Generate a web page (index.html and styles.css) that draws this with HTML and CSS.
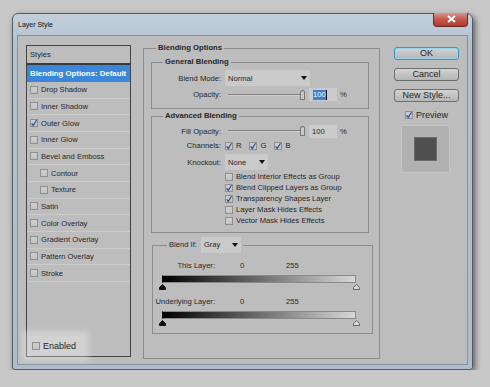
FILE: index.html
```html
<!DOCTYPE html>
<html>
<head>
    <title>Layer Style</title>
    <link rel="stylesheet" href="styles.css">
</head>
<body>
<div class="window">
    <div class="titlebar">
        <span class="title">Layer Style</span>
        <div class="close">
            <svg width="35" height="14" viewBox="0 0 35 14"><path d="M14 4 L21 10 M21 4 L14 10" stroke="#fff" stroke-width="2" fill="none"/></svg>
        </div>
    </div>
    <div class="content">
        <div class="styles">
            <div class="styles-head">Styles</div>
            <div class="style-item selected">Blending Options: Default</div>
            <div class="style-item"><span class="cb"></span>Drop Shadow</div>
            <div class="style-item"><span class="cb"></span>Inner Shadow</div>
            <div class="style-item"><span class="cb on"><svg viewBox="0 0 8 8"><path d="M1.6 4.3 L3.3 6.4 L6.5 1.2"/></svg></span>Outer Glow</div>
            <div class="style-item"><span class="cb"></span>Inner Glow</div>
            <div class="style-item"><span class="cb"></span>Bevel and Emboss</div>
            <div class="style-item sub"><span class="cb"></span>Contour</div>
            <div class="style-item sub"><span class="cb"></span>Texture</div>
            <div class="style-item"><span class="cb"></span>Satin</div>
            <div class="style-item"><span class="cb"></span>Color Overlay</div>
            <div class="style-item"><span class="cb"></span>Gradient Overlay</div>
            <div class="style-item"><span class="cb"></span>Pattern Overlay</div>
            <div class="style-item"><span class="cb"></span>Stroke</div>
            <div class="enabled"><span class="cb"></span>Enabled</div>
        </div>

        <fieldset class="box main">
            <legend>Blending Options</legend>

            <fieldset class="box general">
                <legend>General Blending</legend>
                <div class="row h16 gap2">
                    <span class="lbl">Blend Mode:</span>
                    <div class="select mode">Normal<span class="arrow"></span></div>
                </div>
                <div class="row h13">
                    <span class="lbl">Opacity:</span>
                    <div class="slider"><span class="track"></span><span class="thumb"></span></div>
                    <div class="num"><span class="sel">100</span><span class="caret"></span></div>
                    <span class="pct">%</span>
                </div>
            </fieldset>

            <fieldset class="box advanced">
                <legend>Advanced Blending</legend>
                <div class="row h14">
                    <span class="lbl">Fill Opacity:</span>
                    <div class="slider"><span class="track"></span><span class="thumb"></span></div>
                    <div class="num plain">100</div>
                    <span class="pct">%</span>
                </div>
                <div class="row h15">
                    <span class="lbl">Channels:</span>
                    <span class="cb on"><svg viewBox="0 0 8 8"><path d="M1.6 4.3 L3.3 6.4 L6.5 1.2"/></svg></span><span class="chan">R</span>
                    <span class="cb on"><svg viewBox="0 0 8 8"><path d="M1.6 4.3 L3.3 6.4 L6.5 1.2"/></svg></span><span class="chan">G</span>
                    <span class="cb on"><svg viewBox="0 0 8 8"><path d="M1.6 4.3 L3.3 6.4 L6.5 1.2"/></svg></span><span class="chan">B</span>
                </div>
                <div class="row h16 knock">
                    <span class="lbl">Knockout:</span>
                    <div class="select none">None<span class="arrow"></span></div>
                </div>
                <div class="checks">
                    <div class="check"><span class="cb"></span>Blend Interior Effects as Group</div>
                    <div class="check"><span class="cb on"><svg viewBox="0 0 8 8"><path d="M1.6 4.3 L3.3 6.4 L6.5 1.2"/></svg></span>Blend Clipped Layers as Group</div>
                    <div class="check"><span class="cb on"><svg viewBox="0 0 8 8"><path d="M1.6 4.3 L3.3 6.4 L6.5 1.2"/></svg></span>Transparency Shapes Layer</div>
                    <div class="check"><span class="cb"></span>Layer Mask Hides Effects</div>
                    <div class="check"><span class="cb"></span>Vector Mask Hides Effects</div>
                </div>
            </fieldset>

            <fieldset class="box blendif">
                <legend><span class="bi-label">Blend If:</span><div class="select gray">Gray<span class="arrow"></span></div></legend>
                <div class="bi-row">
                    <span class="bi-lbl">This Layer:</span><span class="v0">0</span><span>255</span>
                </div>
                <div class="bar"></div>
                <div class="thumbs">
                    <svg width="7" height="6" viewBox="0 0 7 6"><path d="M3.5 0.5 L6.5 3.5 L6.5 5.5 L0.5 5.5 L0.5 3.5 Z" fill="#111" stroke="#111"/></svg>
                    <svg width="7" height="6" viewBox="0 0 7 6"><path d="M3.5 0.5 L6.5 3.5 L6.5 5.5 L0.5 5.5 L0.5 3.5 Z" fill="#d8d8d8" stroke="#666"/></svg>
                </div>
                <div class="bi-row second">
                    <span class="bi-lbl">Underlying Layer:</span><span class="v0">0</span><span>255</span>
                </div>
                <div class="bar"></div>
                <div class="thumbs">
                    <svg width="7" height="6" viewBox="0 0 7 6"><path d="M3.5 0.5 L6.5 3.5 L6.5 5.5 L0.5 5.5 L0.5 3.5 Z" fill="#111" stroke="#111"/></svg>
                    <svg width="7" height="6" viewBox="0 0 7 6"><path d="M3.5 0.5 L6.5 3.5 L6.5 5.5 L0.5 5.5 L0.5 3.5 Z" fill="#d8d8d8" stroke="#666"/></svg>
                </div>
            </fieldset>
        </fieldset>

        <div class="side">
            <div class="button ok">OK</div>
            <div class="button">Cancel</div>
            <div class="button">New Style...</div>
            <div class="preview-check"><span class="cb on"><svg viewBox="0 0 8 8"><path d="M1.6 4.3 L3.3 6.4 L6.5 1.2"/></svg></span>Preview</div>
            <div class="preview"><div class="swatch"></div></div>
        </div>
    </div>
</div>
</body>
</html>
```

FILE: styles.css
```css
body {
    margin: 0;
    background: #c8c8c8;
    font-family: "Liberation Sans", Arial, sans-serif;
    font-size: 7.6px;
    color: #262626;
}

.window {
    margin: 13px 0 0 12px;
    width: 461px;
    height: 357px;
    box-sizing: border-box;
    border: 1px solid #555c64;
    border-radius: 6px 6px 3px 3px;
    background: linear-gradient(#c3cfdb, #b3c2d1 30px, #aebdcd);
    padding: 0 4px 4px;
    display: flex;
    flex-direction: column;
    box-shadow: 2px 3px 6px rgba(0, 0, 0, .55);
}
.titlebar {
    height: 21px;
    flex: none;
    display: flex;
    align-items: center;
    justify-content: space-between;
}
.title {
    font-size: 7px;
    padding-left: 1px;
    color: #111;
}
.close {
    align-self: flex-start;
    margin-top: -1px;
    width: 35px;
    height: 14px;
    box-sizing: border-box;
    border: 1px solid #6a2b25;
    border-top: none;
    border-radius: 0 0 4px 4px;
    background: linear-gradient(#d9968c, #c2584b 50%, #b23a2d);
}
.close svg {
    display: block;
    margin-top: -1px;
}

.content {
    flex: 1;
    background: #bdbdbd;
    border: 1px solid #85919d;
    display: flex;
    align-items: flex-start;
    padding: 7px 0 0 8px;
}

/* styles list */
.styles {
    margin: 2px 12px 0 0;
    width: 105px;
    height: 312px;
    box-sizing: border-box;
    border: 1px solid #444;
    display: flex;
    flex-direction: column;
}
.styles-head {
    height: 17px;
    line-height: 17px;
    padding-left: 3px;
    border-bottom: 2px solid #3a3a3a;
}
.style-item {
    height: 16.67px;
    box-sizing: border-box;
    border-bottom: 1px solid #cbcbcb;
    display: flex;
    align-items: center;
    padding-left: 3px;
}
.style-item.selected {
    height: 17px;
    background: #3b86d8;
    color: #fff;
    font-weight: bold;
    font-size: 7.8px;
    border-bottom: none;
}
.style-item.sub {
    padding-left: 13px;
}
.style-item .cb {
    margin-right: 3px;
}
.enabled {
    margin-top: auto;
    width: 52px;
    height: 20px;
    padding-left: 5px;
    display: flex;
    align-items: center;
    font-size: 9px;
    background: rgba(255, 255, 255, .32);
    box-shadow: 0 0 6px 5px rgba(255, 255, 255, .32);
}
.enabled .cb {
    margin-right: 3px;
}

/* checkbox */
.cb {
    display: inline-block;
    flex: none;
    width: 8px;
    height: 8px;
    box-sizing: border-box;
    border: 1px solid #8f8f8f;
    background: linear-gradient(#cfcfcf, #c3c3c3);
}
.cb svg {
    display: block;
    width: 8px;
    height: 8px;
    margin: -1px 0 0 -1px;
}
.cb svg path {
    fill: none;
    stroke: #2d4f9e;
    stroke-width: 1.2;
}

/* group boxes */
.box {
    margin: 0;
    padding: 0;
    border: 1px solid #8c8c8c;
    box-sizing: border-box;
    min-width: 0;
}
.box legend {
    padding: 0 2px;
    font-weight: bold;
    font-size: 7.7px;
    line-height: 10px;
}
.main {
    width: 237px;
    height: 316px;
    margin-right: 14px;
    padding-top: 4px;
}
.main > legend {
    margin-left: 12px;
}
.general {
    width: 218px;
    height: 52px;
    margin-left: 7px;
    padding-top: 3px;
}
.general > legend,
.advanced > legend {
    margin-left: 11px;
}
.advanced {
    width: 218px;
    height: 122px;
    margin: 2px 0 0 7px;
    padding-top: 3px;
}

.row {
    display: flex;
    align-items: center;
}
.h13 { height: 13px; }
.h14 { height: 14px; }
.h15 { height: 15px; }
.h16 { height: 16px; }
.gap2 { margin-bottom: 2px; }
.knock { margin-top: 1px; }
.lbl {
    width: 69px;
    text-align: right;
    margin-right: 4px;
}

.select {
    height: 16px;
    box-sizing: border-box;
    background: #cacaca;
    padding: 0 3px;
    display: flex;
    align-items: center;
    justify-content: space-between;
    font-weight: normal;
}
.select.mode { width: 85px; }
.select.none { width: 43px; }
.select.gray { width: 40px; display: inline-flex; vertical-align: top; margin-left: 4px; }
.arrow {
    width: 0;
    height: 0;
    border-top: 4px solid #111;
    border-left: 3px solid transparent;
    border-right: 3px solid transparent;
}

.slider {
    width: 80px;
    height: 13px;
    display: flex;
    align-items: center;
}
.track {
    flex: 1;
    margin-left: 3px;
    border-top: 1px solid #7c7c7c;
    border-bottom: 1px solid #d0d0d0;
}
.thumb {
    width: 5px;
    height: 10px;
    box-sizing: border-box;
    border: 1px solid #777;
    border-radius: 3px 3px 1px 1px;
    background: #c9c9c9;
}
.num {
    margin-left: 4px;
    width: 28px;
    height: 13px;
    box-sizing: border-box;
    background: #cbcbcb;
    padding-left: 4px;
    display: flex;
    align-items: center;
}
.num.plain {
    padding-left: 3px;
}
.sel {
    background: #3d7fd2;
    color: #fff;
    line-height: 10px;
}
.caret {
    width: 1px;
    height: 10px;
    background: #111;
}
.pct {
    margin-left: 3px;
}
.chan {
    margin: 0 8px 0 3px;
}

.checks {
    margin: 1px 0 0 73px;
}
.check {
    height: 11px;
    display: flex;
    align-items: center;
}
.check .cb {
    margin-right: 3px;
}

/* blend if */
.blendif {
    width: 221px;
    height: 97px;
    margin: 4px 0 0 8px;
    padding-top: 7px;
}
.blendif > legend {
    margin-left: 14px;
    font-weight: normal;
    font-size: 7.6px;
    line-height: 16px;
}
.bi-label {
    vertical-align: top;
}
.bi-row {
    height: 10px;
    display: flex;
    align-items: center;
}
.bi-row.second {
    margin-top: 6px;
}
.bi-lbl {
    width: 62px;
    text-align: right;
}
.v0 {
    width: 46px;
    margin-left: 25px;
}
.bar {
    margin: 5px 0 0 9px;
    width: 194px;
    height: 8px;
    box-sizing: border-box;
    border: 1px solid #8a8a8a;
    border-left-color: #000;
    background: linear-gradient(to right, #000, #d8d8d8);
}
.thumbs {
    margin-left: 5.5px;
    width: 201px;
    height: 7px;
    display: flex;
    justify-content: space-between;
    align-items: flex-start;
}
.thumbs svg {
    display: block;
    margin-top: 1px;
}

/* right column */
.side {
    width: 65px;
    margin-top: 4px;
    display: flex;
    flex-direction: column;
}
.button {
    height: 13px;
    box-sizing: border-box;
    border: 1px solid #6e6e6e;
    border-radius: 3px;
    background: linear-gradient(#d3d3d3, #b5b5b5);
    font-size: 9px;
    line-height: 11px;
    text-align: center;
    margin-bottom: 8px;
}
.button.ok {
    border-color: #3596cd;
    box-shadow: inset 0 0 0 1px #9dd2ee;
}
.preview-check {
    height: 9px;
    padding-left: 11px;
    display: flex;
    align-items: center;
    font-size: 9px;
}
.preview-check .cb {
    margin-right: 3px;
}
.preview {
    margin: 6px 0 0 7px;
    width: 49px;
    height: 48px;
    box-sizing: border-box;
    background: #b1b1b1;
    border: 1px solid #c4c4c4;
    display: flex;
    align-items: center;
    justify-content: center;
}
.swatch {
    width: 23px;
    height: 24px;
    box-sizing: border-box;
    background: #4f4f4f;
    border: 1px solid #6b6b6b;
}
```
